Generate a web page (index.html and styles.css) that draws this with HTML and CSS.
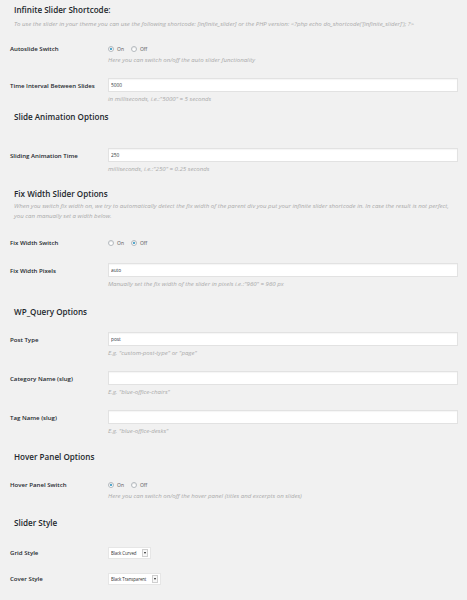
FILE: index.html
```html
<!DOCTYPE html>
<html lang="en">
<head>
    <meta charset="UTF-8">
    <meta name="viewport" content="width=device-width, initial-scale=1.0">
    <title>Infinite Slider Settings</title>
    <link rel="stylesheet" href="styles.css">
</head>
<body>
    <div class="wrap">
        <h3 class="first">Infinite Slider Shortcode:</h3>
        <p class="intro">To use the slider in your theme you can use the following shortcode: [infinite_slider] or the PHP version: &lt;?php echo do_shortcode('[infinite_slider]'); ?&gt;</p>

        <div class="form-table s-auto">
            <div class="row radio-row">
                <div class="label">Autoslide Switch</div>
                <div class="field">
                    <div class="radios">
                        <label><input type="radio" name="autoslide" checked> On</label>
                        <label><input type="radio" name="autoslide"> Off</label>
                    </div>
                    <p class="description">Here you can switch on/off the auto slider functionality</p>
                </div>
            </div>
            <div class="row">
                <div class="label">Time Interval Between Slides</div>
                <div class="field">
                    <input type="text" value="5000">
                    <p class="description">in milliseconds, i.e.:"5000" = 5 seconds</p>
                </div>
            </div>
        </div>

        <h3 class="h-anim">Slide Animation Options</h3>
        <div class="form-table s-anim">
            <div class="row">
                <div class="label">Sliding Animation Time</div>
                <div class="field">
                    <input type="text" value="250">
                    <p class="description">milliseconds, i.e.:"250" = 0.25 seconds</p>
                </div>
            </div>
        </div>

        <h3 class="h-fix">Fix Width Slider Options</h3>
        <p class="intro two-lines">When you switch fix width on, we try to automatically detect the fix width of the parent div you put your infinite slider shortcode in. In case the result is not perfect, you can manually set a width below.</p>
        <div class="form-table s-fix">
            <div class="row radio-row">
                <div class="label">Fix Width Switch</div>
                <div class="field">
                    <div class="radios">
                        <label><input type="radio" name="fixwidth"> On</label>
                        <label><input type="radio" name="fixwidth" checked> Off</label>
                    </div>
                </div>
            </div>
            <div class="row">
                <div class="label">Fix Width Pixels</div>
                <div class="field">
                    <input type="text" value="auto">
                    <p class="description">Manually set the fix width of the slider in pixels i.e.:"960" = 960 px</p>
                </div>
            </div>
        </div>

        <h3 class="h-query">WP_Query Options</h3>
        <div class="form-table s-query">
            <div class="row">
                <div class="label">Post Type</div>
                <div class="field">
                    <input type="text" value="post">
                    <p class="description">E.g. "custom-post-type" or "page"</p>
                </div>
            </div>
            <div class="row">
                <div class="label">Category Name (slug)</div>
                <div class="field">
                    <input type="text" value="">
                    <p class="description">E.g. "blue-office-chairs"</p>
                </div>
            </div>
            <div class="row">
                <div class="label">Tag Name (slug)</div>
                <div class="field">
                    <input type="text" value="">
                    <p class="description">E.g. "blue-office-desks"</p>
                </div>
            </div>
        </div>

        <h3 class="h-hover">Hover Panel Options</h3>
        <div class="form-table s-hover">
            <div class="row radio-row">
                <div class="label">Hover Panel Switch</div>
                <div class="field">
                    <div class="radios">
                        <label><input type="radio" name="hover" checked> On</label>
                        <label><input type="radio" name="hover"> Off</label>
                    </div>
                    <p class="description">Here you can switch on/off the hover panel (titles and excerpts on slides)</p>
                </div>
            </div>
        </div>

        <h3 class="h-style">Slider Style</h3>
        <div class="form-table s-style">
            <div class="row select-row">
                <div class="label">Grid Style</div>
                <div class="field">
                    <div class="select">
                        <select>
                            <option>Black Curved</option>
                        </select>
                        <span class="select-arrow"></span>
                    </div>
                </div>
            </div>
            <div class="row select-row">
                <div class="label">Cover Style</div>
                <div class="field">
                    <div class="select">
                        <select>
                            <option>Black Transparent</option>
                        </select>
                        <span class="select-arrow"></span>
                    </div>
                </div>
            </div>
        </div>
    </div>
</body>
</html>
```

FILE: styles.css
```css
body {
    margin: 0;
    background-color: #f1f1f1;
    color: #23282d;
    font-family: 'Open Sans', 'Liberation Sans', sans-serif;
}

.wrap {
    padding: 5px 9px 0 10px;
}

h3 {
    margin: 0 0 0 4px;
    font-size: 8.1px;
    line-height: 10px;
    font-weight: 600;
    color: #23282d;
}

h3.h-anim { margin-top: 2px; }
h3.h-fix { margin-top: 9px; }
h3.h-query { margin-top: 12px; }
h3.h-hover { margin-top: 10px; }
h3.h-style { margin-top: 11px; }

.intro {
    margin: 5px 0 0 4px;
    font-size: 6.1px;
    line-height: 8px;
    font-style: italic;
    color: #aaa;
}

.intro.two-lines {
    margin-top: 2px;
    line-height: 10px;
}

.form-table { margin-top: 10px; }
.form-table.s-anim { margin-top: 19px; }
.form-table.s-fix { margin-top: 11px; }
.form-table.s-query { margin-top: 8px; }
.form-table.s-hover { margin-top: 12px; }
.form-table.s-style { margin-top: 12px; }

.row {
    display: grid;
    grid-template-columns: 98px 1fr;
    padding: 7px 0;
}

.label {
    font-size: 6.1px;
    font-weight: 600;
    line-height: 15px;
    color: #23282d;
}

.radio-row .label { line-height: 8px; }
.select-row .label { line-height: 12px; }

.s-fix .radio-row { padding-bottom: 9px; }

.field {
    line-height: 0;
}

.field input[type="text"] {
    display: block;
    box-sizing: border-box;
    width: 100%;
    height: 14px;
    margin: 0;
    padding: 0 2px;
    border: 1px solid #e2e2e2;
    background: #fff;
    box-shadow: inset 0 1px 1px rgba(0, 0, 0, 0.04);
    font-family: 'Open Sans', 'Liberation Sans', sans-serif;
    font-size: 4.8px;
    color: #32373c;
    outline: none;
}

.description {
    margin: 3px 0 0;
    font-size: 6.1px;
    line-height: 8px;
    font-style: italic;
    color: #aaa;
}

.radios {
    display: flex;
    gap: 7px;
    height: 8px;
    align-items: center;
}

.radios label {
    display: flex;
    align-items: center;
    gap: 3px;
    font-size: 5px;
    line-height: 8px;
    color: #555;
}

.radios input[type="radio"] {
    appearance: none;
    -webkit-appearance: none;
    box-sizing: border-box;
    width: 6px;
    height: 6px;
    margin: 0;
    border: 1px solid #b4b9be;
    border-radius: 50%;
    background: #fff;
    box-shadow: inset 0 1px 1px rgba(0, 0, 0, 0.1);
    display: flex;
    align-items: center;
    justify-content: center;
}

.radios input[type="radio"]:checked::before {
    content: "";
    width: 2px;
    height: 2px;
    border-radius: 50%;
    background: #1e8cbe;
}

.select {
    display: flex;
    width: fit-content;
    align-items: center;
    height: 12px;
    box-sizing: border-box;
    padding-right: 2px;
    border: 1px solid #e6e6e6;
    background: #fff;
}

.select select {
    appearance: none;
    -webkit-appearance: none;
    border: 0;
    margin: 0;
    padding: 0 5px 0 2px;
    background: transparent;
    font-family: 'Open Sans', 'Liberation Sans', sans-serif;
    font-size: 4.4px;
    letter-spacing: -0.1px;
    color: #333;
    height: 10px;
    outline: none;
}

.select-arrow {
    box-sizing: border-box;
    width: 6px;
    height: 8px;
    border: 1px solid #cfcfcf;
    background: #f7f7f7;
    display: flex;
    align-items: center;
    justify-content: center;
}

.select-arrow::before {
    content: "";
    border-left: 1.5px solid transparent;
    border-right: 1.5px solid transparent;
    border-top: 2px solid #222;
}
```
